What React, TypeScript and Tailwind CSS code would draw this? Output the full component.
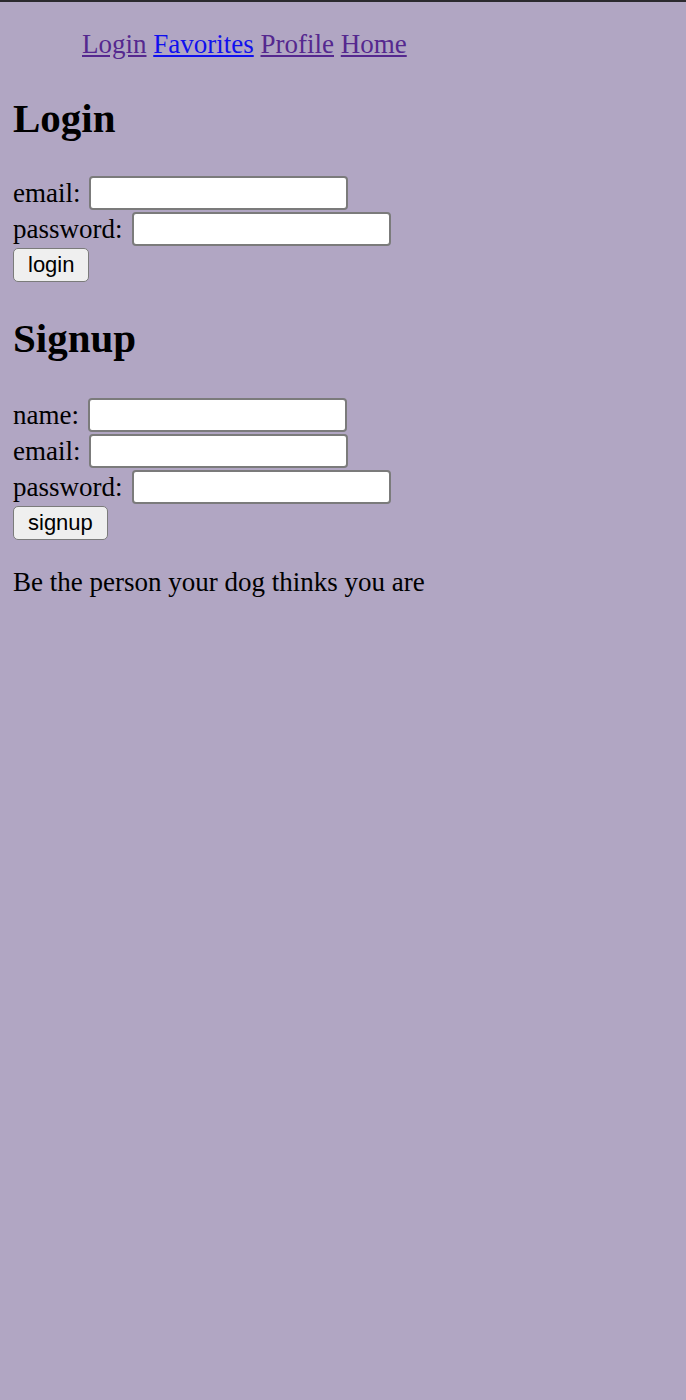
import React from "react";

const inputCls =
  "h-[34px] w-[259px] rounded-[4px] border-2 border-[#7b7b7b] bg-white px-1 text-[18px] outline-none";

const btnCls =
  "flex h-[34px] items-center rounded-[5px] border border-[#7b7b7b] bg-[#efefef] px-[14px] font-['Liberation_Sans',Arial,sans-serif] text-[22px] leading-none text-black";

function Field({ label, type = "text" }: { label: string; type?: string }) {
  return (
    <div className="flex h-[36px] items-center gap-[9px]">
      <span>{label}</span>
      <input type={type} className={inputCls} />
    </div>
  );
}

export default function App() {
  return (
    <div className="min-h-[1400px] bg-[#b1a6c3] font-['Liberation_Serif','Times_New_Roman',serif] text-[27px] leading-[31px] text-black">
      <div className="h-[2px] bg-[#2b2a2e]" />

      <div className="px-[13px]">
        {/* nav */}
        <nav className="pl-[69px] pt-[27px]">
          <a href="#" className="text-[#55288f] underline">Login</a>{" "}
          <a href="#" className="text-[#1010ee] underline">Favorites</a>{" "}
          <a href="#" className="text-[#55288f] underline">Profile</a>{" "}
          <a href="#" className="text-[#55288f] underline">Home</a>
        </nav>

        {/* login */}
        <h2 className="mt-[35px] text-[41px] font-bold leading-[47px]">Login</h2>
        <div className="mt-[33px]">
          <Field label="email:" />
          <Field label="password:" type="password" />
          <div className="mt-[1px]">
            <button className={btnCls}>login</button>
          </div>
        </div>

        {/* signup */}
        <h2 className="mt-[33px] text-[41px] font-bold leading-[47px]">Signup</h2>
        <div className="mt-[35px]">
          <Field label="name:" />
          <Field label="email:" />
          <Field label="password:" type="password" />
          <div className="mt-[1px]">
            <button className={btnCls}>signup</button>
          </div>
        </div>

        <p className="mt-[27px]">Be the person your dog thinks you are</p>
      </div>
    </div>
  );
}
